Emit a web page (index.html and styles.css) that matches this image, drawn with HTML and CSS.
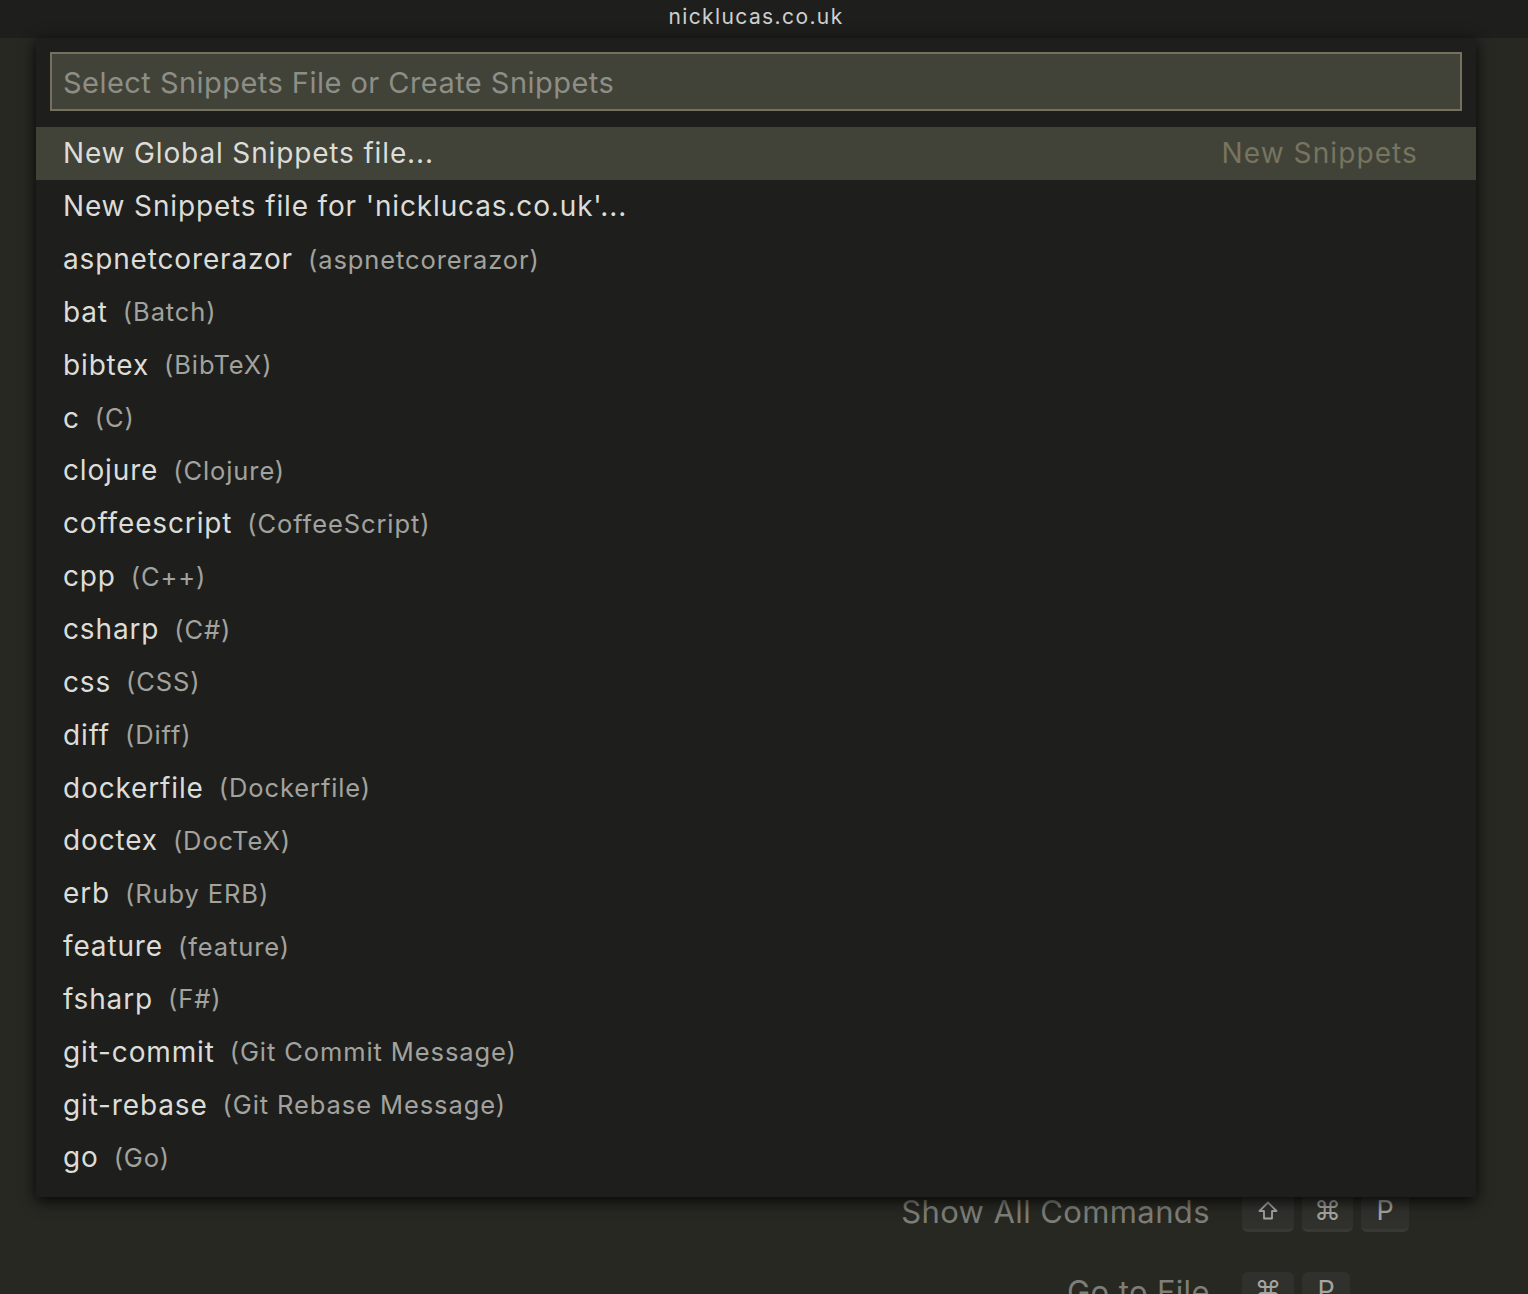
FILE: index.html
```html
<!DOCTYPE html>
<html lang="en">
<head>
<meta charset="utf-8">
<title>nicklucas.co.uk</title>
<link rel="stylesheet" href="styles.css">
</head>
<body>
<div class="app">
  <header class="titlebar">nicklucas.co.uk</header>
  <main class="editor">
    <div class="watermark">
      <div class="wm-label">Show All Commands</div>
      <div class="wm-keys">
        <span class="key"><svg width="22" height="22" viewBox="0 0 22 22"><path d="M11 2.5 L19.5 11 H15 V18.5 H7 V11 H2.5 Z" fill="none" stroke="currentColor" stroke-width="1.8" stroke-linejoin="round"/></svg></span>
        <span class="key">⌘</span>
        <span class="key">P</span>
      </div>
      <div class="wm-label">Go to File</div>
      <div class="wm-keys">
        <span class="key">⌘</span>
        <span class="key">P</span>
      </div>
    </div>
    <section class="quick-pick">
      <div class="qp-input">Select Snippets File or Create Snippets</div>
      <ul class="qp-list">
        <li class="row active"><span class="label">New Global Snippets file...</span><span class="detail">New Snippets</span></li>
        <li class="row"><span class="label">New Snippets file for 'nicklucas.co.uk'...</span></li>
        <li class="row"><span class="label">aspnetcorerazor</span><span class="desc">(aspnetcorerazor)</span></li>
        <li class="row"><span class="label">bat</span><span class="desc">(Batch)</span></li>
        <li class="row"><span class="label">bibtex</span><span class="desc">(BibTeX)</span></li>
        <li class="row"><span class="label">c</span><span class="desc">(C)</span></li>
        <li class="row"><span class="label">clojure</span><span class="desc">(Clojure)</span></li>
        <li class="row"><span class="label">coffeescript</span><span class="desc">(CoffeeScript)</span></li>
        <li class="row"><span class="label">cpp</span><span class="desc">(C++)</span></li>
        <li class="row"><span class="label">csharp</span><span class="desc">(C#)</span></li>
        <li class="row"><span class="label">css</span><span class="desc">(CSS)</span></li>
        <li class="row"><span class="label">diff</span><span class="desc">(Diff)</span></li>
        <li class="row"><span class="label">dockerfile</span><span class="desc">(Dockerfile)</span></li>
        <li class="row"><span class="label">doctex</span><span class="desc">(DocTeX)</span></li>
        <li class="row"><span class="label">erb</span><span class="desc">(Ruby ERB)</span></li>
        <li class="row"><span class="label">feature</span><span class="desc">(feature)</span></li>
        <li class="row"><span class="label">fsharp</span><span class="desc">(F#)</span></li>
        <li class="row"><span class="label">git-commit</span><span class="desc">(Git Commit Message)</span></li>
        <li class="row"><span class="label">git-rebase</span><span class="desc">(Git Rebase Message)</span></li>
        <li class="row"><span class="label">go</span><span class="desc">(Go)</span></li>
      </ul>
    </section>
  </main>
</div>
</body>
</html>
```

FILE: styles.css
```css
* { box-sizing: border-box; }
html, body { margin: 0; padding: 0; height: 100%; }
body {
  background: #272822;
  font-family: Inter, Roboto, "Liberation Sans", sans-serif;
  overflow: hidden;
}
.app {
  display: flex;
  flex-direction: column;
  height: 1294px;
}
.titlebar {
  height: 38px;
  flex: none;
  background: #1e1f1c;
  color: #cfcfcf;
  font-size: 21px;
  text-align: center;
  line-height: 33px;
  letter-spacing: 1.4px;
  padding-right: 16px;
}
.editor {
  flex: 1;
  position: relative;
  background: #272822;
}
.watermark {
  display: grid;
  grid-template-columns: 350px max-content;
  column-gap: 32px;
  row-gap: 40px;
  margin-left: 860px;
  padding-top: 1154px;
  color: #7e7e78;
  font-size: 31px;
}
.wm-label {
  text-align: right;
  line-height: 40px;
  letter-spacing: 0.4px;
}
.wm-keys {
  display: flex;
  gap: 8px;
}
.key {
  display: flex;
  align-items: center;
  justify-content: center;
  min-width: 48px;
  height: 40px;
  padding: 0 12px;
  border-radius: 6px;
  background: #30312c;
  border-bottom: 3px solid #383934;
  color: #a4a4a0;
  font-size: 27px;
}
.key:first-child { min-width: 52px; }
.quick-pick {
  position: absolute;
  top: 0;
  left: 36px;
  width: 1440px;
  background: #1e1f1c;
  padding: 14px 14px 13px;
  box-shadow: 0 4px 14px rgba(0, 0, 0, 0.85);
}
.qp-input {
  height: 59px;
  border: 2px solid #75715e;
  background: #414339;
  color: #8e8e86;
  font-size: 29px;
  letter-spacing: 0.46px;
  padding-left: 11px;
  line-height: 57px;
}
.qp-list {
  list-style: none;
  margin: 16px -14px 0;
  padding: 0;
}
.row {
  display: flex;
  align-items: center;
  height: 52.85px;
  padding: 0 58px 0 27px;
  color: #dcdcd8;
  font-size: 28px;
  letter-spacing: 0.85px;
  white-space: nowrap;
}
.row.active { background: #414339; }
.desc {
  margin-left: 15px;
  color: #a2a29e;
  font-size: 25.5px;
  letter-spacing: 0.9px;
}
.detail {
  margin-left: auto;
  color: #77745f;
  font-size: 28px;
  letter-spacing: 1.1px;
}
```
